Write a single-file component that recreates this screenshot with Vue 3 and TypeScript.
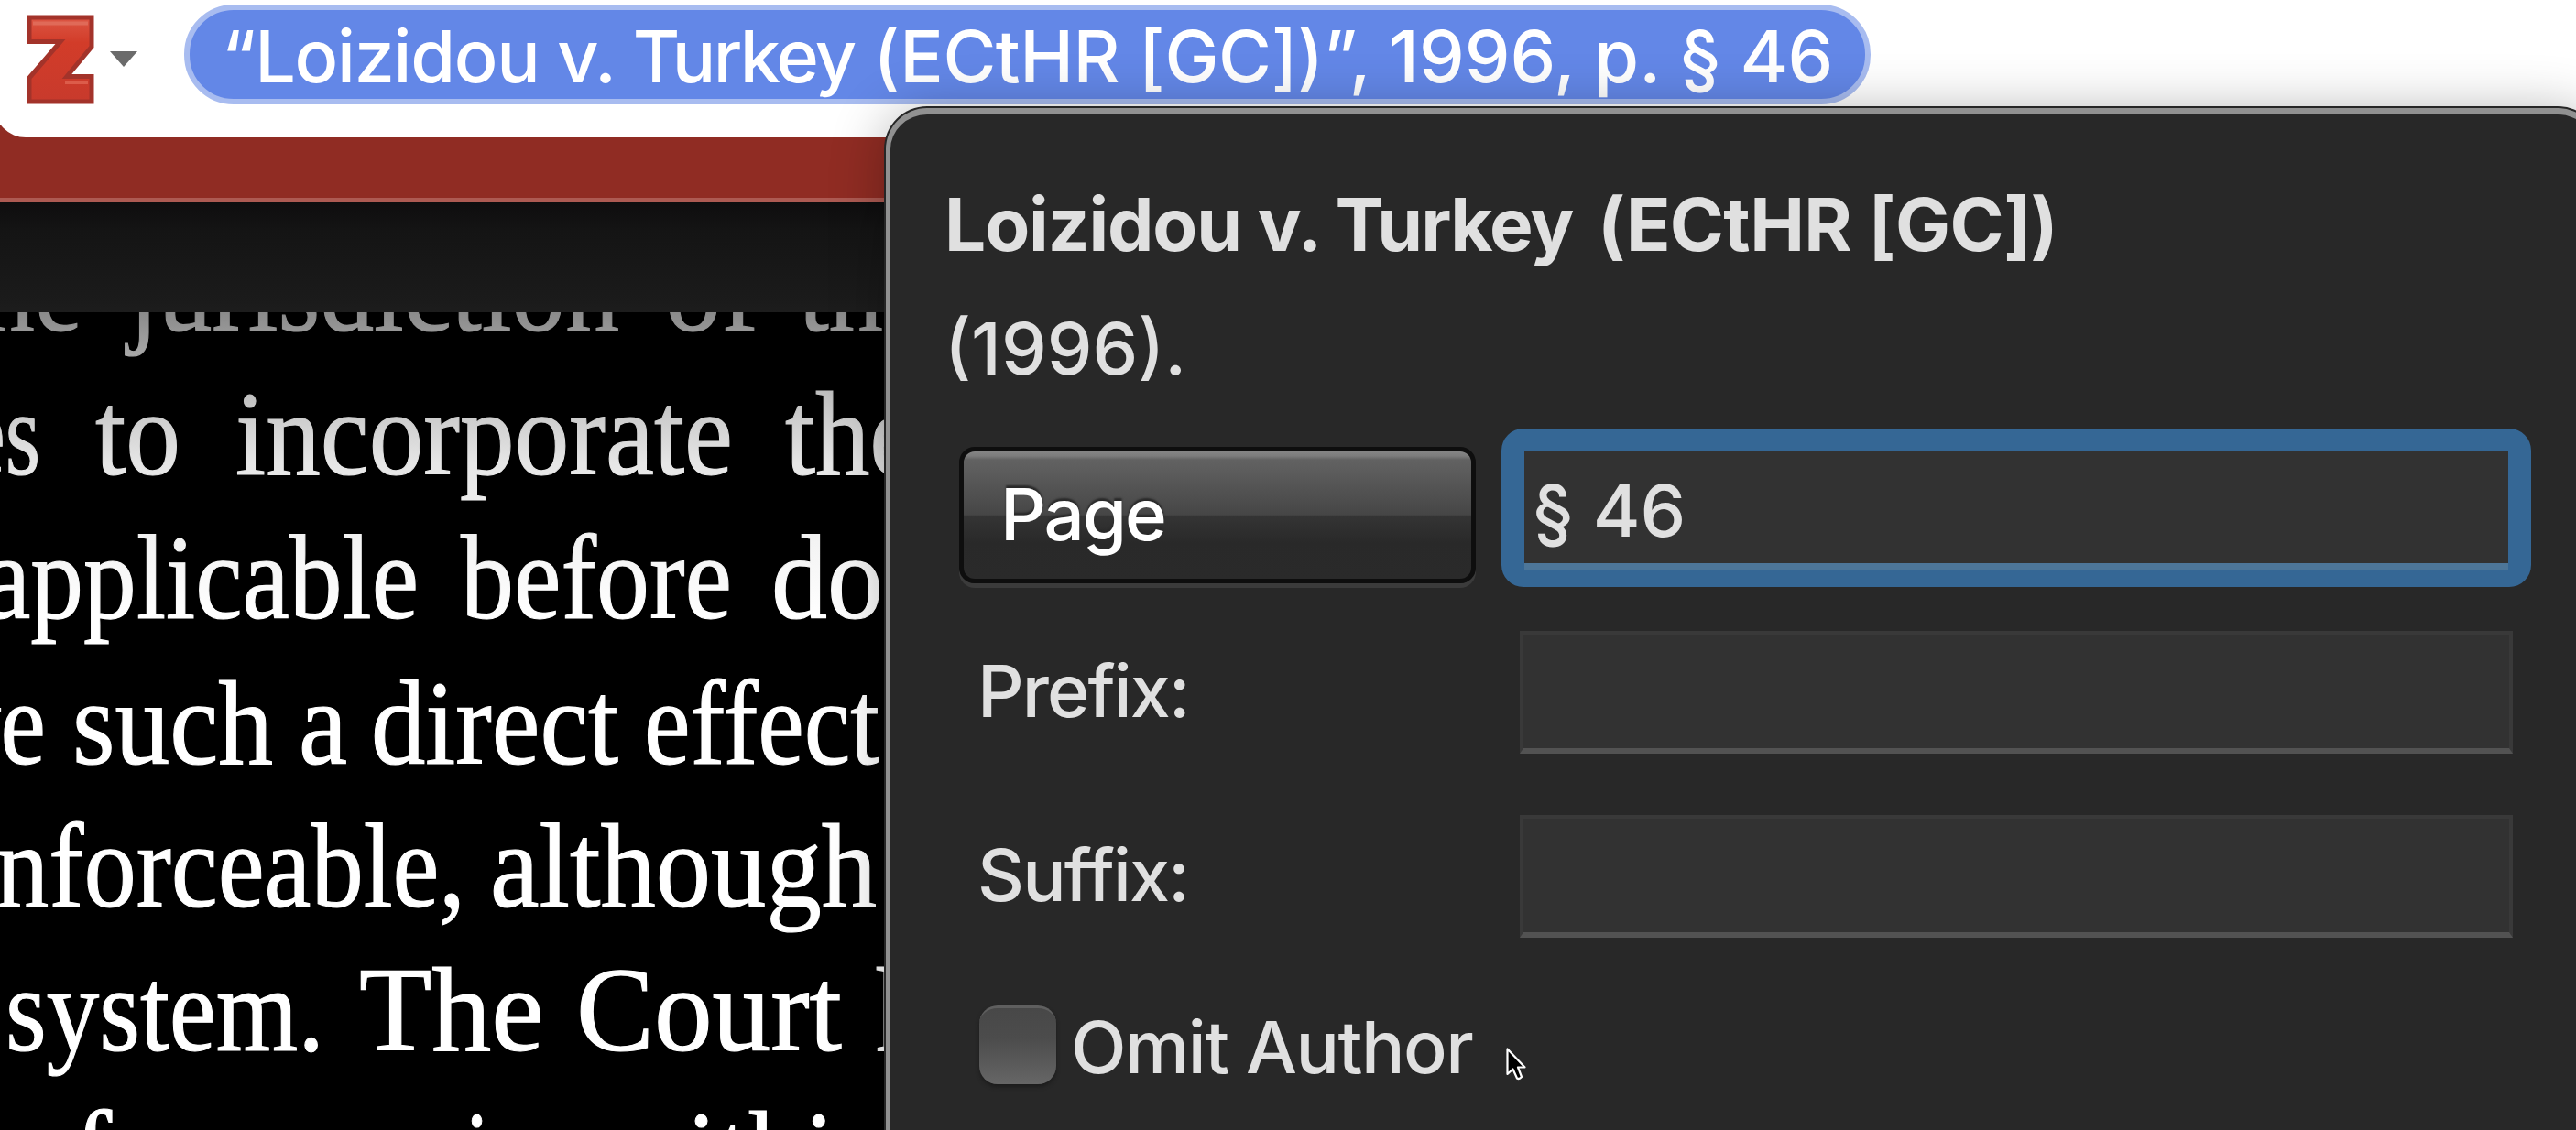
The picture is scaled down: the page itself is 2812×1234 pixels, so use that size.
<script setup lang="ts">
import { ref } from 'vue'

interface Word {
  text: string
  x: number
  width: number
}
interface Line {
  baseline: number
  words: Word[]
}

const word = (text: string, from: number, to: number): Word => ({ text, x: from, width: to - from })

// Baselines are relative to the top of the document view.
const lines: Line[] = [
  { baseline: 20, words: [word('the', -54, 90), word('jurisdiction', 140, 676), word('of', 726, 828), word('the', 872, 1016)] },
  { baseline: 177, words: [word('es', -38, 44), word('to', 104, 197), word('incorporate', 257, 800), word('the', 857, 1002)] },
  { baseline: 334, words: [word('applicable', -18, 457), word('before', 503, 799), word('do', 842, 964)] },
  { baseline: 492.5, words: [word('ve', -55, 50), word('such', 79, 298), word('a', 326, 379), word('direct', 405, 675), word('effect', 703, 960)] },
  { baseline: 649, words: [word('nforceable,', -4, 508), word('although', 535, 957)] },
  { baseline: 806, words: [word('system.', 6, 354), word('The', 392, 594), word('Court', 629, 919), word('has', 956, 1110)] },
  { baseline: 963, words: [word('of', 15, 122), word('coming', 334, 636), word('within', 662, 972)] },
]

const locator = ref('§ 46')
const prefix = ref('')
const suffix = ref('')
</script>

<template>
  <div class="screen">
    <header class="window">
      <div class="bar">
        <svg class="logo" width="74" height="98" viewBox="0 0 74 98">
          <defs>
            <linearGradient id="zfill" x1="0" y1="0" x2="0" y2="1">
              <stop offset="0" stop-color="#dc5644" />
              <stop offset="0.3" stop-color="#d23c29" />
              <stop offset="1" stop-color="#c83a2c" />
            </linearGradient>
          </defs>
          <path d="M3 3H71V35L44 67.500H71V95H3V69L37 29.500H3Z" fill="url(#zfill)" stroke="#a3332a" stroke-width="5" />
          <path d="M7 9.500H67" stroke="#e06a58" stroke-width="4" />
          <path d="M42 74H67" stroke="#dc5c4a" stroke-width="4" />
        </svg>
        <svg class="caret" width="30" height="17" viewBox="0 0 30 17">
          <path d="M0 0H30L15 17Z" fill="#6b6b6b" />
        </svg>
        <div class="pill"><span class="c-name">“Loizidou v. </span><span class="c-party">Turkey</span><span class="c-court"> (ECtHR [GC])”, </span><span class="c-year">1996, p. § 46</span></div>
      </div>
      <div class="edge"></div>
      <div class="shade"></div>
    </header>

    <svg class="doc" width="2812" height="893" viewBox="0 0 2812 893">
      <defs>
        <linearGradient id="ink" gradientUnits="userSpaceOnUse" x1="0" y1="0" x2="0" y2="330">
          <stop offset="0" stop-color="#8a8a8a" />
          <stop offset="0.2" stop-color="#b4b4b4" />
          <stop offset="0.5" stop-color="#e6e6e6" />
          <stop offset="1" stop-color="#ffffff" />
        </linearGradient>
      </defs>
      <g v-for="(line, i) in lines" :key="i" fill="url(#ink)" stroke="url(#ink)" stroke-width="1.2">
        <text
          v-for="(w, j) in line.words"
          :key="j"
          :x="w.x"
          :y="line.baseline"
          :textLength="w.width"
          lengthAdjust="spacingAndGlyphs"
        >{{ w.text }}</text>
      </g>
    </svg>

    <section class="popup">
      <div class="title"><span class="h-name">Loizidou v. </span><span class="h-party">Turkey</span><span class="h-court"> (ECtHR [GC])</span></div>
      <div class="year">(1996).</div>
      <div class="row first">
        <button class="select">Page</button>
        <div class="field focused">{{ locator }}</div>
      </div>
      <div class="row second">
        <label class="label">Prefix:</label>
        <div class="field">{{ prefix }}</div>
      </div>
      <div class="row third">
        <label class="label">Suffix:</label>
        <div class="field">{{ suffix }}</div>
      </div>
      <div class="row fourth">
        <span class="check"></span>
        <span class="omit">Omit Author</span>
      </div>
    </section>

    <svg class="cursor" width="26" height="38" viewBox="0 0 26 38">
      <path
        d="M2.500 2.500V30L8.500 24.500L13 34.500Q15.500 36 18 33L14 22.500H21.500Z"
        fill="#000"
        stroke="#fff"
        stroke-width="2.200"
        stroke-linejoin="round"
      />
    </svg>
  </div>
</template>

<style>
body {
  margin: 0;
  background: #000;
}
</style>

<style scoped>
.screen {
  position: relative;
  width: 2812px;
  height: 1234px;
  overflow: hidden;
  background: #000;
  font-family: Inter, 'Liberation Sans', sans-serif;
  font-size: 79px;
  font-weight: 500;
  color: #e0e0e0;
  white-space: pre;
}
.window {
  height: 341px;
  background: #902c23;
}
.bar {
  box-sizing: border-box;
  height: 150px;
  margin-left: -6px;
  padding-left: 35px;
  background: #fff;
  border-bottom-left-radius: 34px;
  display: flex;
  align-items: flex-start;
}
.logo {
  flex: none;
  margin-top: 16px;
}
.caret {
  flex: none;
  margin: 56px 0 0 17px;
}
.pill {
  box-sizing: border-box;
  flex: none;
  width: 1841px;
  height: 109px;
  margin: 5px 0 0 51px;
  padding-left: 35px;
  border: 6px solid #a8bcf0;
  border-radius: 54px;
  background: #6387e7;
  color: #fff;
  line-height: 101px;
}
.c-name {
  letter-spacing: -1.27px;
}
.c-party {
  letter-spacing: -2.65px;
}
.c-court {
  letter-spacing: -0.5px;
}
.c-year {
  letter-spacing: 0.1px;
}
.edge {
  height: 66px;
  border-bottom: 5px solid #ad5a52;
}
.shade {
  height: 120px;
  background: linear-gradient(#0e0d0e 0, #141414 30px, #1b1b1b 110px, #1d1d1d);
}
.doc {
  display: block;
  font-family: 'Liberation Serif', serif;
  font-size: 132px;
  font-weight: 400;
}
.popup {
  position: absolute;
  left: 967px;
  top: 118px;
  box-sizing: border-box;
  width: 1870px;
  height: 1200px;
  border: 5px solid #919191;
  border-top-width: 7px;
  border-radius: 45px;
  background: #282828;
  box-shadow: 0 0 0 2px #262626, 0 4px 60px rgba(0, 0, 0, 0.3);
  padding-top: 70px;
}
.title {
  margin-left: 59px;
  line-height: 100px;
  font-size: 80px;
  font-weight: 700;
}
.h-name {
  letter-spacing: -1.1px;
}
.h-party {
  margin-right: 9px;
  letter-spacing: -1.85px;
}
.h-court {
  letter-spacing: -0.65px;
}
.year {
  margin: 40px 0 0 59px;
  line-height: 90px;
}
.row {
  display: flex;
}
.first {
  height: 173px;
  margin: 43px 0 0 75px;
}
.select {
  box-sizing: border-box;
  width: 564px;
  height: 149px;
  margin: 20px 28px 0 0;
  padding: 0 0 3px 40px;
  border: 5px solid #0e0e0e;
  border-radius: 17px;
  background: linear-gradient(#858585 0, #7c7c7c 5px, #626262 9px, #464646 69px, #343434 71px, #292929 100px, #2a2a2a);
  box-shadow: 0 5px 0 #3b3b3b;
  font: inherit;
  font-size: 78px;
  letter-spacing: -2.1px;
  color: #fff;
  text-align: left;
  text-shadow: 0 -3px 2px #2a2a2a;
}
.field {
  box-sizing: border-box;
  width: 1084px;
  height: 134px;
  border: 4px solid #393939;
  border-bottom: 6px solid #525252;
  background: #323232;
}
.focused {
  width: 1124px;
  height: 173px;
  border: 25px solid #356795;
  border-bottom-width: 19px;
  border-radius: 24px;
  box-shadow: inset 0 -7px 0 #4d7699;
  padding-left: 9px;
  line-height: 129px;
}
.second {
  margin: 48px 0 0 95px;
}
.third {
  margin: 67px 0 0 95px;
}
.label {
  width: 592px;
  line-height: 130px;
  letter-spacing: -1.9px;
}
.fourth {
  margin: 74px 0 0 97px;
}
.check {
  box-sizing: border-box;
  width: 84px;
  height: 86px;
  margin-right: 16px;
  border-top: 3px solid #5f5f5f;
  border-radius: 20px;
  background: linear-gradient(#484848, #4c4c4c 40%, #666);
  box-shadow: 0 3px 4px #1c1c1c;
}
.omit {
  line-height: 90px;
  letter-spacing: -1.5px;
}
.cursor {
  position: absolute;
  left: 1643px;
  top: 1143px;
}
</style>
